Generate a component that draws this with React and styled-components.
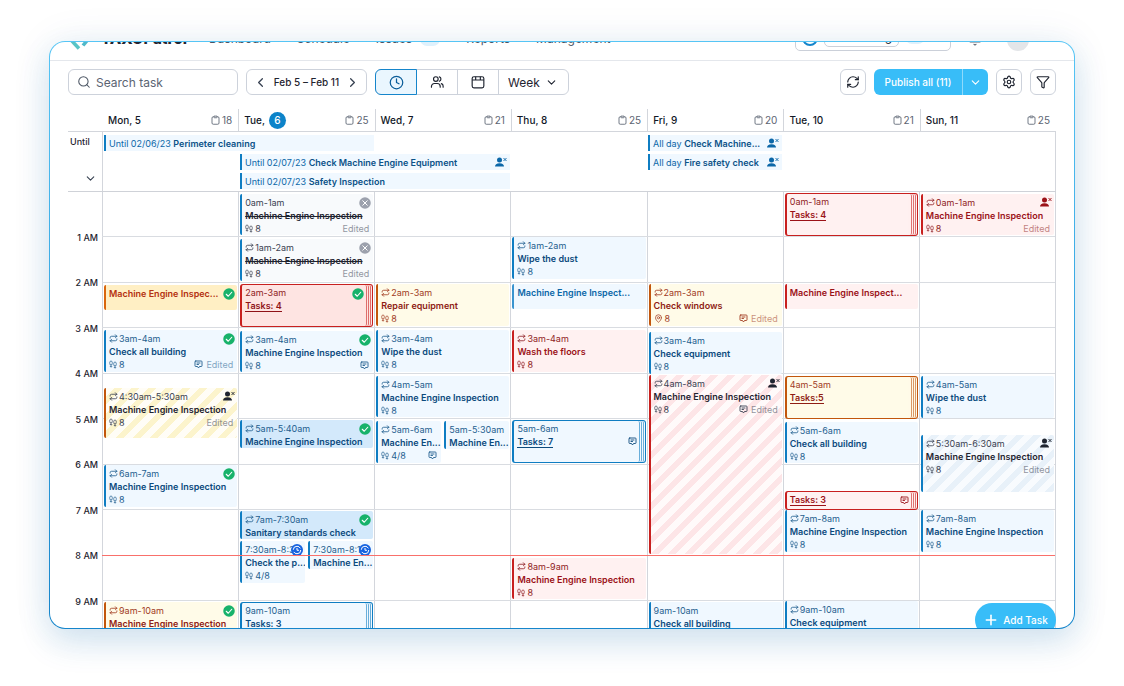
import React from 'react'
import styled, { createGlobalStyle, css } from 'styled-components'
import { Search, ChevronLeft, ChevronRight, ChevronDown, Clock, RefreshCw, Filter, Settings, Plus, Repeat, Bell, MapPin } from 'lucide-react'

const tones = {
    blue: { bar: '#0f7dc2', bg: '#f0f8ff', time: '#1f5f8f', text: '#0b4a7d' },
    strong: { bar: '#0f7dc2', bg: '#d3e9fb', time: '#1f5f8f', text: '#0b4a7d' },
    pale: { bar: '#3a94cf', bg: '#f0f8ff', time: '#1f5f8f', text: '#0b67a8' },
    gray: { bar: '#0f7dc2', bg: '#f8fafc', time: '#3b4252', text: '#1f2430' },
    amber: { bar: '#c2560c', bg: '#fffbe8', time: '#a13b1f', text: '#8f1d14' },
    gold: { bar: '#d9660d', bg: '#ffefc4', time: '#a13b1f', text: '#b4310f' },
    red: { bar: '#c8201f', bg: '#fff1f1', time: '#8f1d24', text: '#9b1218' },
    crimson: { bar: '#c8201f', bg: '#fee4e2', time: '#8f1d24', text: '#8f1218' },
    stripeAmber: { bar: '#c2560c', bg: 'repeating-linear-gradient(135deg, #fffdf6 0 6px, #fcf4cc 6px 12px)', time: '#3b4252', text: '#1f2430' },
    stripeRed: { bar: '#c8201f', bg: 'repeating-linear-gradient(135deg, #fffafa 0 6px, #fde5e7 6px 12px)', time: '#3b4252', text: '#1f2430' },
    stripeBlue: { bar: '#0f7dc2', bg: 'repeating-linear-gradient(135deg, #f8fbfe 0 6px, #e8f1f9 6px 12px)', time: '#3b4252', text: '#1f2430' },
}

const days = [
    { name: 'Mon,', date: '5', count: 18 },
    { name: 'Tue,', date: '6', count: 25, today: true },
    { name: 'Wed,', date: '7', count: 21 },
    { name: 'Thu,', date: '8', count: 25 },
    { name: 'Fri,', date: '9', count: 20 },
    { name: 'Tue,', date: '10', count: 21 },
    { name: 'Sun,', date: '11', count: 25 },
]

const longTasks = [
    { row: 1, day: 0, span: 2, when: 'Until 02/06/23', title: 'Perimeter cleaning' },
    { row: 2, day: 1, span: 2, when: 'Until 02/07/23', title: 'Check Machine Engine Equipment', unassigned: true },
    { row: 3, day: 1, span: 2, when: 'Until 02/07/23', title: 'Safety Inspection' },
    { row: 1, day: 4, span: 1, when: 'All day', title: 'Check Machine...', unassigned: true },
    { row: 2, day: 4, span: 1, when: 'All day', title: 'Fire safety check', unassigned: true },
]

const inspection = 'Machine Engine Inspection'

// from / to are minutes since midnight, half is the left (0) or right (1) part of the day
const tasks = [
    { day: 0, from: 122, to: 156, tone: 'gold', title: 'Machine Engine Inspec...', badge: 'done' },
    { day: 0, from: 182, to: 237, tone: 'blue', time: '3am-4am', repeat: true, title: 'Check all building', steps: '8', badge: 'done', comment: true, edited: true },
    { day: 0, from: 258, to: 324, tone: 'stripeAmber', time: '4:30am-5:30am', repeat: true, title: inspection, steps: '8', badge: 'user', edited: true },
    { day: 0, from: 360, to: 415, tone: 'blue', time: '6am-7am', repeat: true, title: inspection, steps: '8', badge: 'done' },
    { day: 0, from: 541, to: 596, tone: 'amber', time: '9am-10am', repeat: true, title: inspection, badge: 'done' },

    { day: 1, from: 2, to: 57, tone: 'gray', time: '0am-1am', title: inspection, steps: '8', badge: 'cancel', edited: true, struck: true },
    { day: 1, from: 62, to: 117, tone: 'gray', time: '1am-2am', repeat: true, title: inspection, steps: '8', badge: 'cancel', edited: true, struck: true },
    { day: 1, from: 121, to: 178, tone: 'crimson', time: '2am-3am', title: 'Tasks: 4', badge: 'done', stack: true },
    { day: 1, from: 183, to: 238, tone: 'blue', time: '3am-4am', repeat: true, title: inspection, steps: '8', badge: 'done', comment: true },
    { day: 1, from: 301, to: 338, tone: 'strong', time: '5am-5:40am', repeat: true, title: inspection, badge: 'done' },
    { day: 1, from: 421, to: 458, tone: 'strong', time: '7am-7:30am', repeat: true, title: 'Sanitary standards check', badge: 'done' },
    { day: 1, half: 0, from: 460, to: 516, tone: 'blue', time: '7:30am-8:3', title: 'Check the p...', steps: '4/8', badge: 'progress' },
    { day: 1, half: 1, from: 460, to: 497, tone: 'blue', time: '7:30am-8:1', title: 'Machine En...', badge: 'progress' },
    { day: 1, from: 541, to: 598, tone: 'blue', time: '9am-10am', title: 'Tasks: 3', stack: true, plain: true },

    { day: 2, from: 121, to: 177, tone: 'amber', time: '2am-3am', repeat: true, title: 'Repair equipment', steps: '8' },
    { day: 2, from: 182, to: 237, tone: 'blue', time: '3am-4am', repeat: true, title: 'Wipe the dust', steps: '8' },
    { day: 2, from: 242, to: 297, tone: 'blue', time: '4am-5am', repeat: true, title: inspection, steps: '8' },
    { day: 2, half: 0, from: 302, to: 357, tone: 'blue', time: '5am-6am', repeat: true, title: 'Machine En...', steps: '4/8', comment: true },
    { day: 2, half: 1, from: 302, to: 339, tone: 'blue', time: '5am-5:30am', title: 'Machine En...' },

    { day: 3, from: 60, to: 115, tone: 'blue', time: '1am-2am', repeat: true, title: 'Wipe the dust', steps: '8' },
    { day: 3, from: 121, to: 154, tone: 'pale', title: 'Machine Engine Inspect...' },
    { day: 3, from: 182, to: 237, tone: 'red', time: '3am-4am', repeat: true, title: 'Wash the floors', steps: '8' },
    { day: 3, from: 301, to: 358, tone: 'blue', time: '5am-6am', title: 'Tasks: 7', stack: true, comment: true },
    { day: 3, from: 482, to: 537, tone: 'red', time: '8am-9am', repeat: true, title: inspection, steps: '8' },

    { day: 4, from: 121, to: 177, tone: 'amber', time: '2am-3am', repeat: true, title: 'Check windows', place: '8', comment: true, edited: true },
    { day: 4, from: 185, to: 240, tone: 'blue', time: '3am-4am', repeat: true, title: 'Check equipment', steps: '8' },
    { day: 4, from: 241, to: 478, tone: 'stripeRed', time: '4am-8am', repeat: true, title: inspection, steps: '8', badge: 'user', comment: true, edited: true },
    { day: 4, from: 541, to: 596, tone: 'blue', time: '9am-10am', title: 'Check all building' },

    { day: 5, from: 1, to: 58, tone: 'red', time: '0am-1am', title: 'Tasks: 4', stack: true },
    { day: 5, from: 121, to: 154, tone: 'red', title: 'Machine Engine Inspect...' },
    { day: 5, from: 243, to: 300, tone: 'amber', time: '4am-5am', title: 'Tasks:5', stack: true },
    { day: 5, from: 303, to: 358, tone: 'blue', time: '5am-6am', repeat: true, title: 'Check all building', steps: '8' },
    { day: 5, from: 394, to: 419, tone: 'red', title: 'Tasks: 3', stack: true, comment: true },
    { day: 5, from: 420, to: 475, tone: 'blue', time: '7am-8am', repeat: true, title: inspection, steps: '8' },
    { day: 5, from: 539, to: 594, tone: 'blue', time: '9am-10am', repeat: true, title: 'Check equipment' },

    { day: 6, from: 2, to: 57, tone: 'red', time: '0am-1am', repeat: true, title: inspection, steps: '8', badge: 'user', edited: true },
    { day: 6, from: 243, to: 298, tone: 'blue', time: '4am-5am', repeat: true, title: 'Wipe the dust', steps: '8' },
    { day: 6, from: 321, to: 396, tone: 'stripeBlue', time: '5:30am-6:30am', repeat: true, title: inspection, steps: '8', badge: 'user', edited: true },
    { day: 6, from: 420, to: 475, tone: 'blue', time: '7am-8am', repeat: true, title: inspection, steps: '8' },
]

const hours = [1, 2, 3, 4, 5, 6, 7, 8, 9]
const now = 8

function StepsIcon() {
    return (
        <svg width="8" height="9" viewBox="0 0 16 18" fill="none" stroke="currentColor" strokeWidth="1.4">
            <path d="M2 9.5C1 6 1 2 4 2s3 4 2 7.500zM2.300 12h3.400c.3 3-3.400 3-3.400 0z" />
            <path d="M10 11.500C9 8 9 4 12 4s3 4 2 7.500zM10.300 14h3.400c.3 3-3.400 3-3.400 0z" />
        </svg>
    )
}

function CommentIcon() {
    return (
        <svg width="9" height="9" viewBox="0 0 18 18" fill="none" stroke="currentColor" strokeWidth="1.800" strokeLinejoin="round" strokeLinecap="round">
            <path d="M3.500 2h11A1.500 1.500 0 0 1 16 3.500v8a1.500 1.500 0 0 1-1.500 1.500H11l-2 3-2-3H3.500A1.500 1.500 0 0 1 2 11.500v-8A1.500 1.500 0 0 1 3.500 2z" />
            <path d="M6 6h6M6 9h3" />
        </svg>
    )
}

function UserOffIcon() {
    return (
        <svg width="12" height="10" viewBox="0 0 24 20" fill="currentColor">
            <circle cx="9" cy="6" r="5" />
            <path d="M0 19c0-4 3-6.500 9-6.500s9 2.500 9 6.500z" />
            <path d="M17 2l6 6M23 2l-6 6" fill="none" stroke="currentColor" strokeWidth="1.800" />
        </svg>
    )
}

function DoneIcon() {
    return (
        <svg width="12" height="12" viewBox="0 0 24 24" fill="none">
            <circle cx="12" cy="12" r="11.500" fill="#17b26a" />
            <path d="M6.500 12.500l4 4 7-8" stroke="#fff" strokeWidth="2.200" strokeLinecap="round" strokeLinejoin="round" />
        </svg>
    )
}

function CancelIcon() {
    return (
        <svg width="12" height="12" viewBox="0 0 24 24">
            <circle cx="12" cy="12" r="11.500" fill="#9ca1ad" />
            <path d="M7.500 7.500l9 9M16.500 7.500l-9 9" stroke="#fff" strokeWidth="2" strokeLinecap="round" />
        </svg>
    )
}

function ProgressIcon() {
    return (
        <svg width="12" height="12" viewBox="0 0 24 24" fill="none">
            <circle cx="12" cy="12" r="12" fill="#1663e0" />
            <circle cx="12" cy="12" r="7.500" stroke="#fff" strokeWidth="2" strokeDasharray="19 4.500" />
            <path d="M12 8v4.500h4" stroke="#fff" strokeWidth="2" />
        </svg>
    )
}

function ClipboardIcon() {
    return (
        <svg width="9" height="10" viewBox="0 0 18 20" fill="none" stroke="currentColor" strokeWidth="1.700">
            <rect x="2" y="3.500" width="14" height="15" rx="2.500" />
            <path d="M6 4.500V2.200h6v2.300a1 1 0 0 1-1 1H7a1 1 0 0 1-1-1z" fill="#fff" />
        </svg>
    )
}

function PeopleIcon() {
    return (
        <svg width="14" height="14" viewBox="0 0 24 24" fill="none" stroke="currentColor" strokeWidth="2" strokeLinecap="round">
            <circle cx="10" cy="7" r="4" />
            <path d="M2.500 21v-1.500a5 5 0 0 1 5-5h5a5 5 0 0 1 5 5V21M16 3.200a4 4 0 0 1 0 7.600M19.500 14.800A4.500 4.500 0 0 1 22.500 19v2" />
        </svg>
    )
}

function WindowIcon() {
    return (
        <svg width="14" height="14" viewBox="0 0 24 24" fill="none" stroke="currentColor" strokeWidth="2" strokeLinejoin="round">
            <rect x="2" y="3" width="20" height="19" rx="3" />
            <path d="M2 8.500h20M8 3v5.500M16 3v5.500" />
        </svg>
    )
}

const badges = { done: DoneIcon, cancel: CancelIcon, progress: ProgressIcon, user: UserOffIcon }

function Task({ task }) {
    const Badge = badges[task.badge]
    const start = 1 + task.day * 2 + (task.half || 0)
    const place = {
        gridColumn: `${start} / span ${task.half === undefined ? 2 : 1}`,
        gridRow: `${task.from + 1} / ${task.to + 1}`,
    }
    return (
        <TaskBox $tone={tones[task.tone]} $stack={task.stack} style={place}>
            {task.stack && [1, 3, 5].map((edge) => <StackEdge key={edge} $tone={tones[task.tone]} $edge={edge} />)}
            {task.time && (
                <TaskTime $tone={tones[task.tone]}>
                    {task.repeat && <Repeat size={9} strokeWidth={2.2} />}
                    {task.time}
                </TaskTime>
            )}
            <TaskTitle $struck={task.struck} $link={task.stack && !task.plain}>
                <span>{task.title}</span>
            </TaskTitle>
            {(task.steps || task.place) && (
                <TaskFoot $tone={tones[task.tone]}>
                    {task.place ? <MapPin size={9} /> : <StepsIcon />}
                    {task.steps || task.place}
                    <FootEnd>
                        {task.comment && <CommentIcon />}
                        {task.edited && <Edited>Edited</Edited>}
                    </FootEnd>
                </TaskFoot>
            )}
            {task.stack && task.comment && <StackComment><CommentIcon /></StackComment>}
            {Badge && <BadgeSpot $stack={task.stack}><Badge /></BadgeSpot>}
        </TaskBox>
    )
}

export default function App() {
    return (
        <>
            <GlobalStyle />
            <Page>
                <Shell>
                    <TopBar>
                        <Mark width="19" height="16" viewBox="0 0 19 16" fill="none" strokeWidth="3.500">
                            <path d="M1 6l8 8.500" stroke="#58c4c6" />
                            <path d="M13 11.500l5-6" stroke="#4fb8c8" />
                        </Mark>
                        <Brand>TAXOPatrol</Brand>
                        <TopNav>
                            <a href="#dashboard">Dashboard</a>
                            <a href="#schedule">Schedule</a>
                            <a href="#issues">Issues<NavCount /></a>
                            <a href="#reports">Reports</a>
                            <a href="#management">Management</a>
                        </TopNav>
                        <Account>
                            <AccountDot />
                            <AccountPill>Working</AccountPill>
                            <NavCount />
                        </Account>
                        <Bell size={14} color="#5b6472" />
                        <Avatar />
                    </TopBar>

                    <Toolbar>
                        <SearchBox>
                            <Search size={14} strokeWidth={1.8} />
                            <input type="text" placeholder="Search task" aria-label="Search task" />
                        </SearchBox>
                        <DateNav>
                            <IconButton aria-label="Previous week"><ChevronLeft size={15} /></IconButton>
                            <span>Feb 5 – Feb 11</span>
                            <IconButton aria-label="Next week"><ChevronRight size={15} /></IconButton>
                        </DateNav>
                        <Segments>
                            <Segment $active aria-label="By time"><Clock size={15} /></Segment>
                            <Segment aria-label="By people"><PeopleIcon /></Segment>
                            <Segment aria-label="By month"><WindowIcon /></Segment>
                            <RangePick>
                                <select aria-label="Range" defaultValue="Week">
                                    <option>Day</option>
                                    <option>Week</option>
                                    <option>Month</option>
                                </select>
                                <ChevronDown size={13} />
                            </RangePick>
                        </Segments>
                        <Spacer />
                        <SquareButton aria-label="Refresh"><RefreshCw size={14} /></SquareButton>
                        <Publish>
                            <button>Publish all (11)</button>
                            <button aria-label="Publish options"><ChevronDown size={13} /></button>
                        </Publish>
                        <SquareButton aria-label="Settings"><Settings size={14} /></SquareButton>
                        <SquareButton aria-label="Filter"><Filter size={14} /></SquareButton>
                    </Toolbar>

                    <Calendar>
                        <DayRow>
                            <span />
                            {days.map((d) => (
                                <Day key={d.date}>
                                    {d.name} {d.today ? <Today>{d.date}</Today> : d.date}
                                    <DayCount><ClipboardIcon />{d.count}</DayCount>
                                </Day>
                            ))}
                        </DayRow>

                        <UntilRow>
                            <UntilLabel>
                                Until
                                <IconButton aria-label="Collapse"><ChevronDown size={13} /></IconButton>
                            </UntilLabel>
                            <UntilGrid>
                                {longTasks.map((t) => (
                                    <LongTask key={t.when + t.title} style={{ gridRow: t.row, gridColumn: `${t.day + 1} / span ${t.span}` }}>
                                        <p>{t.when} <b>{t.title}</b></p>
                                        {t.unassigned && <UserOffIcon />}
                                    </LongTask>
                                ))}
                            </UntilGrid>
                        </UntilRow>

                        <Body>
                            <Hours>
                                {hours.map((h) => <Hour key={h}>{h} AM</Hour>)}
                            </Hours>
                            <TimeGrid>
                                {days.map((d, i) => (
                                    <DayLine key={d.date} style={{ gridColumn: `${i * 2 + 1} / span 2` }} />
                                ))}
                                {tasks.map((t, i) => <Task key={i} task={t} />)}
                                {hours.map((h) => (
                                    <HourLine key={h} $now={h === now} style={{ gridRow: `${(h - 1) * 60 + 1} / span 60` }} />
                                ))}
                            </TimeGrid>
                        </Body>
                    </Calendar>
                    <AddTask><Plus size={16} strokeWidth={2.4} />Add Task</AddTask>
                </Shell>
            </Page>
        </>
    )
}

const GlobalStyle = createGlobalStyle`
    * {
        box-sizing: border-box;
    }
    body {
        margin: 0;
        background: #fff;
        font-family: Inter, 'Liberation Sans', sans-serif;
        color: #1f2430;
    }
    button, input, select {
        font: inherit;
        color: inherit;
        margin: 0;
        padding: 0;
        border: 0;
        background: none;
    }
    svg {
        display: block;
        flex-shrink: 0;
    }
`
const Page = styled.main`
    height: 100vh;
    padding: 41px 49px 57px;
    display: flex;
`
const Shell = styled.div`
    flex: 1;
    min-width: 0;
    position: relative;
    overflow: hidden;
    border: 1px solid transparent;
    border-radius: 16px;
    background: linear-gradient(#fff, #fff) padding-box, linear-gradient(#56c5f5, #1585cb) border-box;
    box-shadow: 0 14px 32px rgba(20, 110, 180, 0.16), 0 0 40px rgba(30, 90, 140, 0.08);
`
const TopBar = styled.header`
    height: 19px;
    padding: 0 45px 0 20px;
    border-bottom: 1px solid #e4e7ec;
    display: flex;
    align-items: flex-end;
    gap: 12px;
    > svg {
        margin-bottom: 14px;
    }
`
const Mark = styled.svg`
    && {
        margin-bottom: 10px;
    }
`
const Brand = styled.strong`
    font-size: 15px;
    line-height: 18px;
    font-weight: 800;
    padding-bottom: 12px;
`
const TopNav = styled.nav`
    flex: 1;
    display: flex;
    gap: 26px;
    padding: 0 0 12px 10px;
    font-size: 12px;
    line-height: 18px;
    a {
        display: flex;
        gap: 8px;
        align-items: center;
        color: #4b5563;
        text-decoration: none;
    }
`
const NavCount = styled.i`
    width: 20px;
    height: 14px;
    border-radius: 7px;
    background: #dff1fc;
`
const Account = styled.div`
    width: 156px;
    height: 28px;
    margin: 0 5px 9px 0;
    padding: 0 6px;
    border: 1px solid #cbd0d9;
    border-radius: 5px;
    display: flex;
    align-items: center;
    gap: 6px;
`
const AccountDot = styled.i`
    width: 16px;
    height: 18px;
    border: 2px solid #1585cb;
    border-radius: 8px;
`
const AccountPill = styled.span`
    width: 75px;
    height: 20px;
    padding-right: 6px;
    border: 1px solid #cbd0d9;
    border-radius: 5px;
    font-size: 12px;
    line-height: 18px;
    text-align: right;
`
const Avatar = styled.i`
    width: 22px;
    height: 22px;
    margin: 0 0 9px 13px;
    border-radius: 50%;
    background: #e4e6e9;
`
const Toolbar = styled.div`
    padding: 8px 18px 14px;
    display: flex;
    gap: 8px;
    font-size: 12px;
`
const frame = css`
    height: 26px;
    border: 1px solid #cdd2db;
    border-radius: 6px;
    display: flex;
    align-items: center;
`
const SearchBox = styled.label`
    ${frame}
    width: 170px;
    padding: 0 8px;
    gap: 5px;
    color: #4b5563;
    input {
        flex: 1;
        min-width: 0;
        outline: 0;
    }
    input::placeholder {
        color: #5b6472;
    }
`
const DateNav = styled.div`
    ${frame}
    width: 121px;
    padding: 0 6px;
    justify-content: space-between;
    font-size: 10px;
    font-weight: 500;
`
const IconButton = styled.button`
    display: flex;
    color: #374151;
`
const Segments = styled.div`
    ${frame}
    align-items: stretch;
`
const Segment = styled.button`
    width: 41px;
    display: flex;
    align-items: center;
    justify-content: center;
    border-right: 1px solid #cdd2db;
    ${({ $active }) => $active && css`
        margin: -1px 0 -1px -1px;
        width: 42px;
        border: 1px solid #1585cb;
        border-radius: 6px 0 0 6px;
        background: #eaf6fe;
        color: #0b5d99;
    `}
`
const RangePick = styled.div`
    width: 69px;
    padding: 0 10px 0 9px;
    display: flex;
    align-items: center;
    justify-content: space-between;
    select {
        appearance: none;
        outline: 0;
    }
`
const Spacer = styled.div`
    flex: 1;
`
const SquareButton = styled.button`
    ${frame}
    && {
        border: 1px solid #cdd2db;
    }
    width: 26px;
    justify-content: center;
`
const Publish = styled.div`
    height: 26px;
    width: 114px;
    display: flex;
    border-radius: 6px;
    background: #38bdf8;
    color: #fff;
    font-size: 10px;
    font-weight: 500;
    button {
        flex: 1;
        display: flex;
        align-items: center;
        justify-content: center;
    }
    button + button {
        flex: 0 0 26px;
        border-left: 1px solid #8fdafb;
    }
`
const Calendar = styled.section`
    padding: 0 18px;
    font-size: 9px;
    line-height: 13px;
`
const DayRow = styled.div`
    display: grid;
    grid-template-columns: 34px repeat(7, minmax(0, 1fr));
    height: 23px;
    border-bottom: 1px solid #d3d6dc;
`
const Day = styled.div`
    display: flex;
    align-items: center;
    gap: 4px;
    padding: 0 6px 0 5px;
    border-left: 1px solid #d3d6dc;
    font-size: 10px;
    font-weight: 500;
    color: #111827;
    &:nth-child(2) {
        border-color: transparent;
    }
`
const Today = styled.span`
    width: 17px;
    height: 17px;
    border-radius: 50%;
    background: #0c83c9;
    color: #fff;
    line-height: 17px;
    text-align: center;
`
const DayCount = styled.span`
    margin-left: auto;
    display: flex;
    align-items: center;
    gap: 2px;
    font-weight: 400;
    color: #5b6472;
`
const UntilRow = styled.div`
    display: grid;
    grid-template-columns: 34px minmax(0, 1fr);
    height: 60px;
    border-bottom: 1px solid #cfd2d8;
`
const UntilLabel = styled.div`
    padding: 3px 5px 6px 2px;
    display: flex;
    flex-direction: column;
    justify-content: space-between;
    font-weight: 500;
    button {
        align-self: flex-end;
    }
`
const UntilGrid = styled.div`
    display: grid;
    grid-template-columns: repeat(7, minmax(0, 1fr));
    grid-template-rows: repeat(3, 16px);
    row-gap: 3px;
    padding-top: 3px;
    border: solid #d3d6dc;
    border-width: 0 1px;
`
const LongTask = styled.div`
    margin: 0 1px;
    padding: 0 3px;
    border-left: 2px solid #0f7dc2;
    background: #f0f8ff;
    color: #0b67a8;
    display: flex;
    align-items: center;
    justify-content: space-between;
    p {
        margin: 0;
        white-space: nowrap;
    }
    b {
        font-weight: 600;
        color: #0b5288;
    }
`
const Body = styled.div`
    display: grid;
    grid-template-columns: 34px minmax(0, 1fr);
`
const Hours = styled.div`
    display: grid;
    grid-template-rows: repeat(10, 1fr);
    padding: 0 4px 0 0;
`
const Hour = styled.span`
    align-self: end;
    margin-bottom: -6px;
    text-align: right;
    font-weight: 500;
    white-space: nowrap;
`
// one row for each minute, two columns for each day
const TimeGrid = styled.div`
    display: grid;
    height: 455px;
    grid-template-columns: repeat(14, minmax(0, 1fr));
    grid-template-rows: repeat(600, minmax(0, 1fr));
    border-right: 1px solid #d3d6dc;
`
const DayLine = styled.i`
    grid-row: 1 / -1;
    border-left: 1px solid #d3d6dc;
`
const HourLine = styled.i`
    grid-column: 1 / -1;
    border-bottom: 1px solid #d9dce1;
    pointer-events: none;
    ${({ $now }) => $now && css`
        position: relative;
        border-color: #f9706b;
    `}
`
const TaskBox = styled.article`
    position: relative;
    min-width: 0;
    margin: 0 1px 0 2px;
    padding: 2px 4px 0 3px;
    border-left: 2px solid ${({ $tone }) => $tone.bar};
    border-radius: 2px;
    background: ${({ $tone }) => $tone.bg};
    color: ${({ $tone }) => $tone.text};
    overflow: hidden;
    ${({ $stack, $tone }) => $stack && css`
        padding: 1px 22px 0 3px;
        border: 1px solid ${$tone.bar};
        border-left-width: 2px;
        border-radius: 3px;
    `}
`
const StackEdge = styled.i`
    position: absolute;
    top: 0;
    bottom: 0;
    right: ${({ $edge }) => $edge}px;
    width: 3px;
    border-right: 1px solid ${({ $tone }) => $tone.bar};
    border-radius: 0 2px 2px 0;
    opacity: 0.6;
`
const TaskTime = styled.div`
    display: flex;
    align-items: center;
    gap: 1px;
    white-space: nowrap;
    color: ${({ $tone }) => $tone.time};
`
const TaskTitle = styled.div`
    font-weight: 600;
    white-space: nowrap;
    text-decoration: ${({ $struck }) => ($struck ? 'line-through' : 'none')};
    span {
        border-bottom: ${({ $link }) => ($link ? '1px solid' : 0)};
    }
`
const TaskFoot = styled.div`
    display: flex;
    align-items: center;
    gap: 2px;
    color: ${({ $tone }) => $tone.time};
`
const FootEnd = styled.span`
    margin-left: auto;
    display: flex;
    align-items: center;
    gap: 3px;
`
const Edited = styled.span`
    opacity: 0.55;
`
const BadgeSpot = styled.span`
    position: absolute;
    top: 3px;
    right: ${({ $stack }) => ($stack ? 8 : 2)}px;
`
const StackComment = styled.span`
    position: absolute;
    top: 0;
    bottom: 0;
    right: 8px;
    display: flex;
    align-items: center;
`
const AddTask = styled.button`
    position: absolute;
    right: 18px;
    bottom: -9px;
    height: 34px;
    width: 81px;
    border-radius: 17px;
    background: #38bdf8;
    color: #fff;
    display: flex;
    align-items: center;
    justify-content: center;
    gap: 4px;
    font-size: 10px;
    font-weight: 500;
`
